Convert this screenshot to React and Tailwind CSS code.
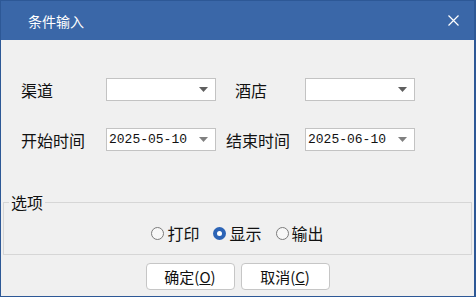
import React from 'react';

function Caret({ color }) {
  return (
    <svg width="9" height="5" viewBox="0 0 9 5" className="shrink-0">
      <path d="M0 0h9L4.5 5z" fill={color} />
    </svg>
  );
}

function Combo({ value, caret = '#5f5f5f' }) {
  return (
    <div className="w-[110px] h-[23px] bg-white border border-[#c3c3c3] flex items-center pl-[2px] pr-[7px]">
      <span className="flex-1 font-['Liberation_Mono',monospace] text-[13px] leading-none text-[#111]">
        {value}
      </span>
      <Caret color={caret} />
    </div>
  );
}

function Radio({ label, checked }) {
  return (
    <label className="flex items-center gap-[3px]">
      {checked ? (
        <span className="w-[13px] h-[13px] rounded-full bg-[#2c64b6] flex items-center justify-center">
          <span className="w-[5px] h-[5px] rounded-full bg-white" />
        </span>
      ) : (
        <span className="w-[13px] h-[13px] rounded-full border border-[#7b7b7b] bg-[#f7f7f7]" />
      )}
      <span className="text-[16px] leading-[20px] text-[#111]">{label}</span>
    </label>
  );
}

export default function App() {
  return (
    <div className="w-[476px] h-[297px] flex flex-col bg-[#f0f0f0] border border-r-2 border-[#2d5896] font-['Noto_Sans_CJK_SC','Noto_Sans',sans-serif] text-[#111]">
      {/* title bar */}
      <div className="h-[39px] shrink-0 bg-[#3a67a8] flex items-center justify-between pl-[27px] pr-[15px] text-white">
        <span className="text-[14px] leading-none">条件输入</span>
        <svg width="11" height="11" viewBox="0 0 11 11">
          <path d="M0.5 0.5l10 10M10.5 0.5l-10 10" stroke="white" strokeWidth="1.2" />
        </svg>
      </div>

      {/* fields */}
      <div className="flex flex-col gap-[27px] pt-[38px] pl-[20px]">
        <div className="flex items-center h-[23px]">
          <span className="w-[85px] text-[16px] leading-none">渠道</span>
          <Combo value="" />
          <span className="ml-[19px] w-[70px] text-[16px] leading-none">酒店</span>
          <Combo value="" />
        </div>
        <div className="flex items-center h-[23px]">
          <span className="w-[85px] text-[16px] leading-none">开始时间</span>
          <Combo value="2025-05-10" caret="#808080" />
          <span className="ml-[10px] w-[79px] text-[16px] leading-none">结束时间</span>
          <Combo value="2025-06-10" caret="#808080" />
        </div>
      </div>

      {/* options group */}
      <fieldset className="mt-[43px] mx-[2px] border border-[#d6d6d6] p-0 pb-[11px]">
        <legend className="ml-[5px] px-[2px] text-[16px] leading-[16px]">选项</legend>
        <div className="flex justify-center gap-[14px] pt-[13px]">
          <Radio label="打印" />
          <Radio label="显示" checked />
          <Radio label="输出" />
        </div>
      </fieldset>

      {/* buttons */}
      <div className="flex justify-center gap-[6px] mt-[8px]">
        <button className="w-[89px] h-[27px] bg-white border border-[#c6c6c6] rounded-[4px] text-[15px] leading-none">
          确定(<span className="underline">O</span>)
        </button>
        <button className="w-[89px] h-[27px] bg-white border border-[#c6c6c6] rounded-[4px] text-[15px] leading-none">
          取消(<span className="underline">C</span>)
        </button>
      </div>
    </div>
  );
}
